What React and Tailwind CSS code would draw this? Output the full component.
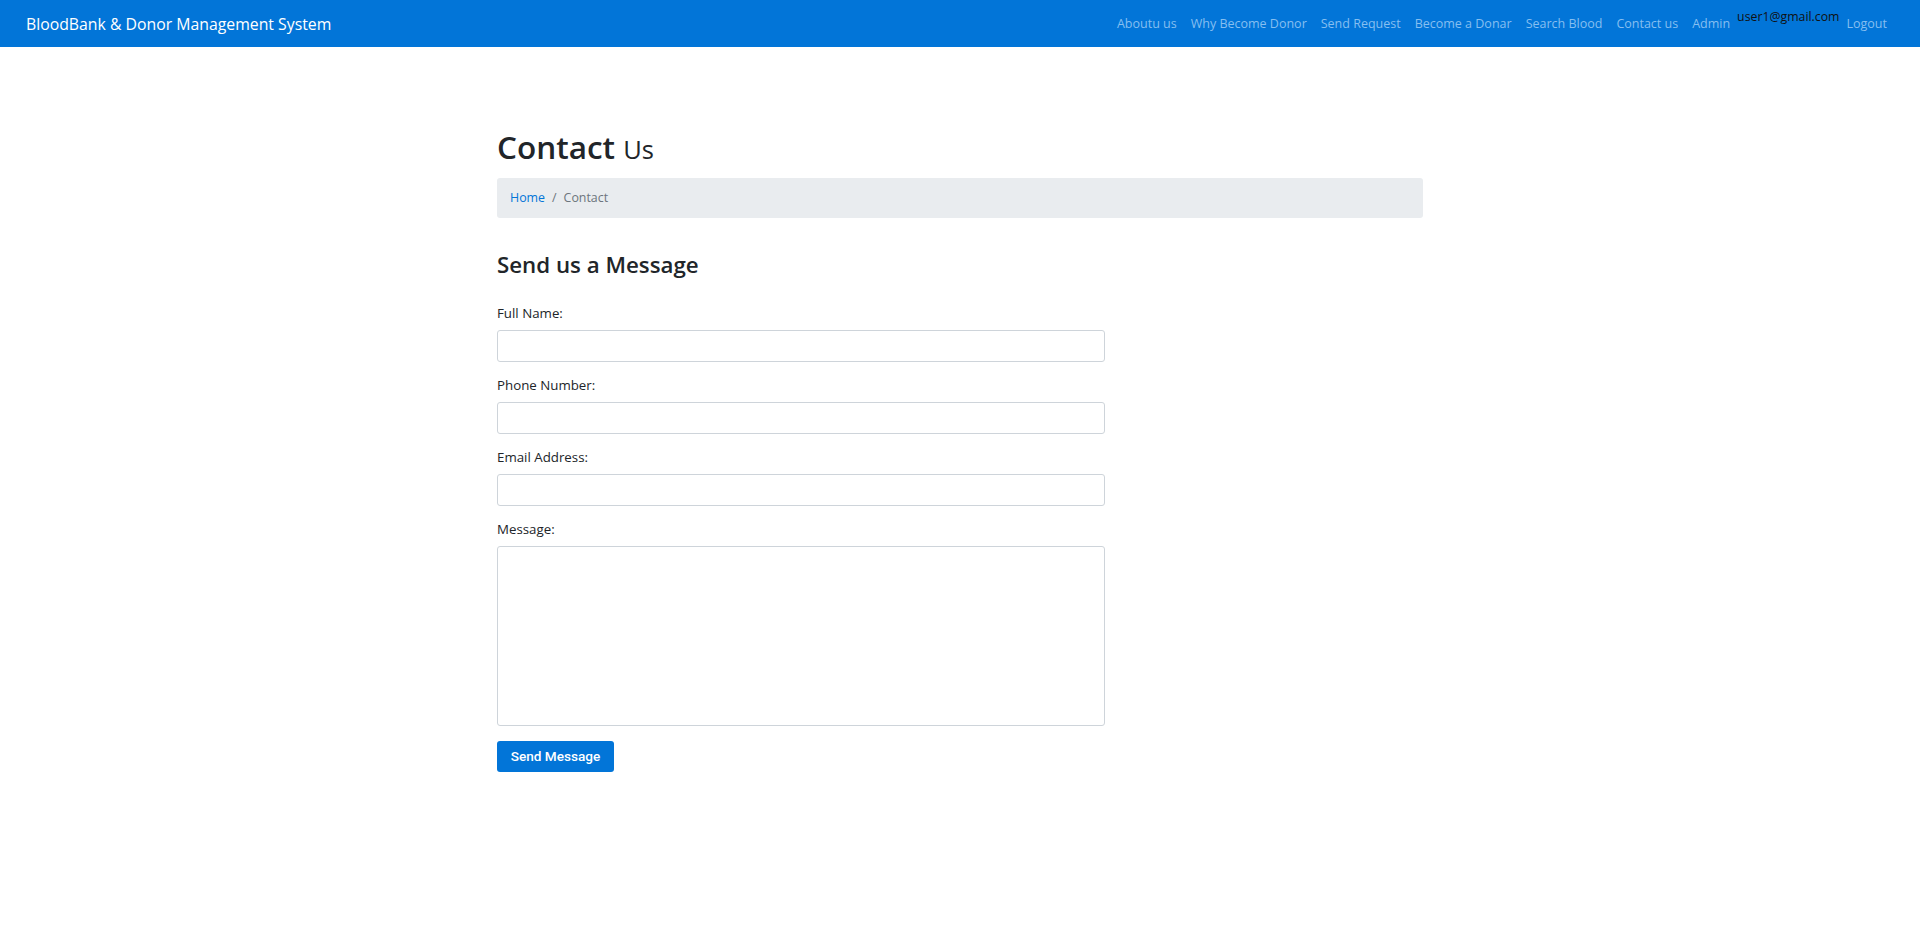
import React, { useState } from "react";

const links = [
  "Aboutu us",
  "Why Become Donor",
  "Send Request",
  "Become a Donar",
  "Search Blood",
  "Contact us",
  "Admin",
];

const Field = ({ label, children }) => (
  <div className="mb-[13px]">
    <label className="block text-[13.3px] leading-[20px] mb-[7px] text-[#212529]">{label}</label>
    {children}
  </div>
);

const inputCls =
  "block w-full h-[32px] px-[10px] text-[13.3px] bg-white border border-[#ced4da] rounded-[3px] outline-none";

const App = () => {
  const [form, setForm] = useState({ name: "", phone: "", email: "", message: "" });

  return (
    <div className="min-h-[932px] bg-white text-[#212529]" style={{ fontFamily: '"Open Sans", "Noto Sans", sans-serif' }}>
      <nav className="h-[47px] bg-[#0275d8] flex items-center pl-[26px] pr-[26px]">
        <a href="#" className="text-white text-[15.8px] leading-[20px]">
          BloodBank &amp; Donor Management System
        </a>
        <ul className="ml-auto h-full flex items-center">
          {links.map((l) => (
            <li key={l}>
              <a href="#" className="block px-[7px] text-[12.5px] leading-[20px] text-[#86bff0]">
                {l}
              </a>
            </li>
          ))}
          <li className="self-start mt-[9px] text-[12.3px] leading-[16px] text-[#111]">user1@gmail.com</li>
          <li>
            <a href="#" className="block px-[7px] text-[12.5px] leading-[20px] text-[#86bff0]">
              Logout
            </a>
          </li>
        </ul>
      </nav>

      <div className="w-[926px] mx-auto pt-[80px]">
        <h1 className="text-[31.5px] leading-[40px] font-semibold mb-[9px]">
          Contact <small className="text-[25.5px] font-normal">Us</small>
        </h1>
        <ol className="flex items-center h-[40px] px-[13px] bg-[#e9ecef] rounded-[3px] text-[12.4px] mb-[33px]">
          <li>
            <a href="#" className="text-[#0275d8]">Home</a>
          </li>
          <li className="px-[7px] text-[#6c757d]">/</li>
          <li className="text-[#6c757d]">Contact</li>
        </ol>

        <div className="w-[608px]">
          <h3 className="text-[22.3px] leading-[28px] font-semibold mb-[24px]">Send us a Message</h3>
          <form onSubmit={(e) => e.preventDefault()}>
            <Field label="Full Name:">
              <input
                type="text"
                className={inputCls}
                value={form.name}
                onChange={(e) => setForm({ ...form, name: e.target.value })}
              />
            </Field>
            <Field label="Phone Number:">
              <input
                type="tel"
                className={inputCls}
                value={form.phone}
                onChange={(e) => setForm({ ...form, phone: e.target.value })}
              />
            </Field>
            <Field label="Email Address:">
              <input
                type="email"
                className={inputCls}
                value={form.email}
                onChange={(e) => setForm({ ...form, email: e.target.value })}
              />
            </Field>
            <Field label="Message:">
              <textarea
                className="block w-full h-[180px] px-[10px] py-[5px] text-[13.3px] bg-white border border-[#ced4da] rounded-[3px] outline-none resize-none"
                value={form.message}
                onChange={(e) => setForm({ ...form, message: e.target.value })}
              />
            </Field>
            <button
              type="submit"
              className="h-[31px] w-[117px] mt-[2px] bg-[#0275d8] text-white text-[13.6px] font-medium rounded-[3px]"
              style={{ fontFamily: "Roboto, sans-serif" }}
            >
              Send Message
            </button>
          </form>
        </div>
      </div>
    </div>
  );
};

export default App;
